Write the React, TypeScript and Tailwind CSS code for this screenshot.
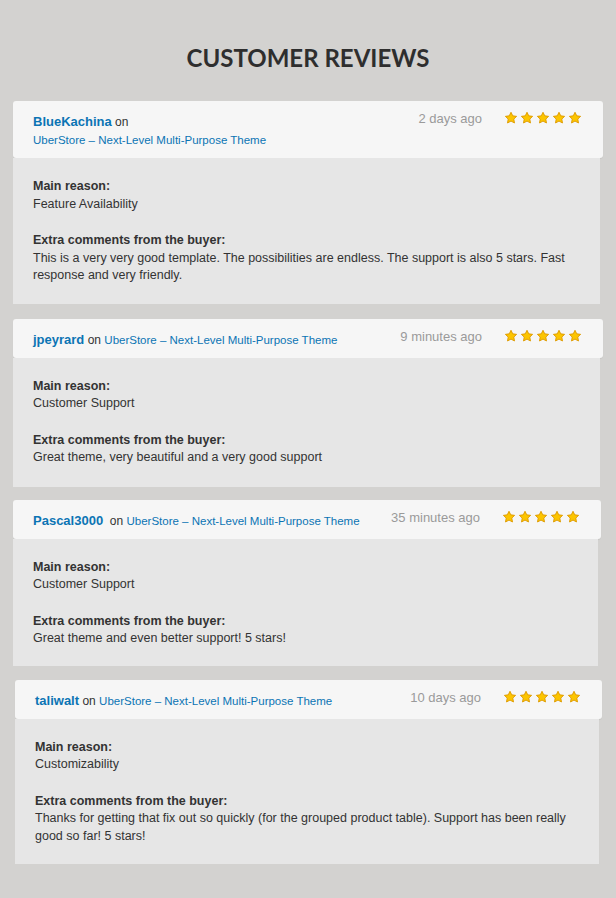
import React from 'react';

type Review = {
  user: string;
  time: string;
  reason: string;
  comment: string;
  stacked?: boolean;
  wideGap?: boolean;
  wrap: string;
  body: string;
};

const product = 'UberStore – Next-Level Multi-Purpose Theme';

const reviews: Review[] = [
  {
    user: 'BlueKachina',
    time: '2 days ago',
    reason: 'Feature Availability',
    comment:
      'This is a very very good template. The possibilities are endless. The support is also 5 stars. Fast response and very friendly.',
    stacked: true,
    wrap: 'mt-0 ml-[13px] mr-[13px]',
    body: 'pb-[19px]',
  },
  {
    user: 'jpeyrard',
    time: '9 minutes ago',
    reason: 'Customer Support',
    comment: 'Great theme, very beautiful and a very good support',
    wrap: 'mt-[15px] ml-[13px] mr-[13px]',
    body: 'pb-[20px]',
  },
  {
    user: 'Pascal3000',
    time: '35 minutes ago',
    reason: 'Customer Support',
    comment: 'Great theme and even better support! 5 stars!',
    wideGap: true,
    wrap: 'mt-[13px] ml-[13px] mr-[15px]',
    body: 'pb-[18px]',
  },
  {
    user: 'taliwalt',
    time: '10 days ago',
    reason: 'Customizability',
    comment:
      'Thanks for getting that fix out so quickly (for the grouped product table). Support has been really good so far! 5 stars!',
    wrap: 'mt-[14px] ml-[15px] mr-[14px]',
    body: 'pb-[19px]',
  },
];

const Star = () => (
  <svg width="14" height="14" viewBox="0 0 24 24" className="block">
    <path
      d="M12 2.2l2.95 6.1 6.7.9-4.9 4.65 1.25 6.65L12 17.3l-6 3.2 1.25-6.65-4.9-4.65 6.7-.9z"
      fill="#fcc500"
      stroke="#de9a00"
      strokeWidth="1.6"
      strokeLinejoin="round"
    />
  </svg>
);

const Stars = () => (
  <div className="flex gap-[2px]">
    {[0, 1, 2, 3, 4].map(i => (
      <Star key={i} />
    ))}
  </div>
);

const ReviewCard = ({ r }: { r: Review }) => {
  const title = <span className="text-[11.5px] text-[#0b74b4]">{product}</span>;
  return (
    <div className={r.wrap}>
      <div className="flex items-start justify-between rounded-[3px] bg-[#f6f6f6] pl-[20px] pr-[21px] pt-[11px] pb-[9px] shadow-[0_1px_1px_rgba(0,0,0,0.06)]">
        <div className="leading-[18px]">
          <span className="text-[13px] font-bold text-[#0b74b4]">{r.user}</span>
          <span className="text-[12px] text-[#333]">{r.wideGap ? '\u00a0\u00a0on ' : ' on '}</span>
          {r.stacked ? <div className="-mt-[1px]">{title}</div> : title}
        </div>
        <div className="flex items-center -mt-[2px] leading-[18px]">
          <span className="text-[13px] text-[#9a9a9a]">{r.time}</span>
          <span className="ml-[22px] -mt-[2px]">
            <Stars />
          </span>
        </div>
      </div>
      <div className={`mr-[3px] bg-[#e6e6e6] px-[20px] pt-[20px] text-[12.5px] leading-[17.5px] text-[#333] ${r.body}`}>
        <div className="font-bold">Main reason:</div>
        <div>{r.reason}</div>
        <div className="mt-[19px] font-bold">Extra comments from the buyer:</div>
        <div className="pr-[8px]">{r.comment}</div>
      </div>
    </div>
  );
};

export default function App() {
  return (
    <div
      className="min-h-[898px] w-[616px] bg-[#d3d2d0] pb-[36px]"
      style={{ fontFamily: '"Liberation Sans", Arial, sans-serif' }}
    >
      <h1
        className="pt-[43px] text-center text-[24px] font-bold leading-[30px] text-[#2e2e2e]"
        style={{ fontFamily: 'Lato, "Noto Sans", sans-serif' }}
      >
        CUSTOMER REVIEWS
      </h1>
      <div className="mt-[28px]">
        {reviews.map(r => (
          <ReviewCard key={r.user} r={r} />
        ))}
      </div>
    </div>
  );
}
